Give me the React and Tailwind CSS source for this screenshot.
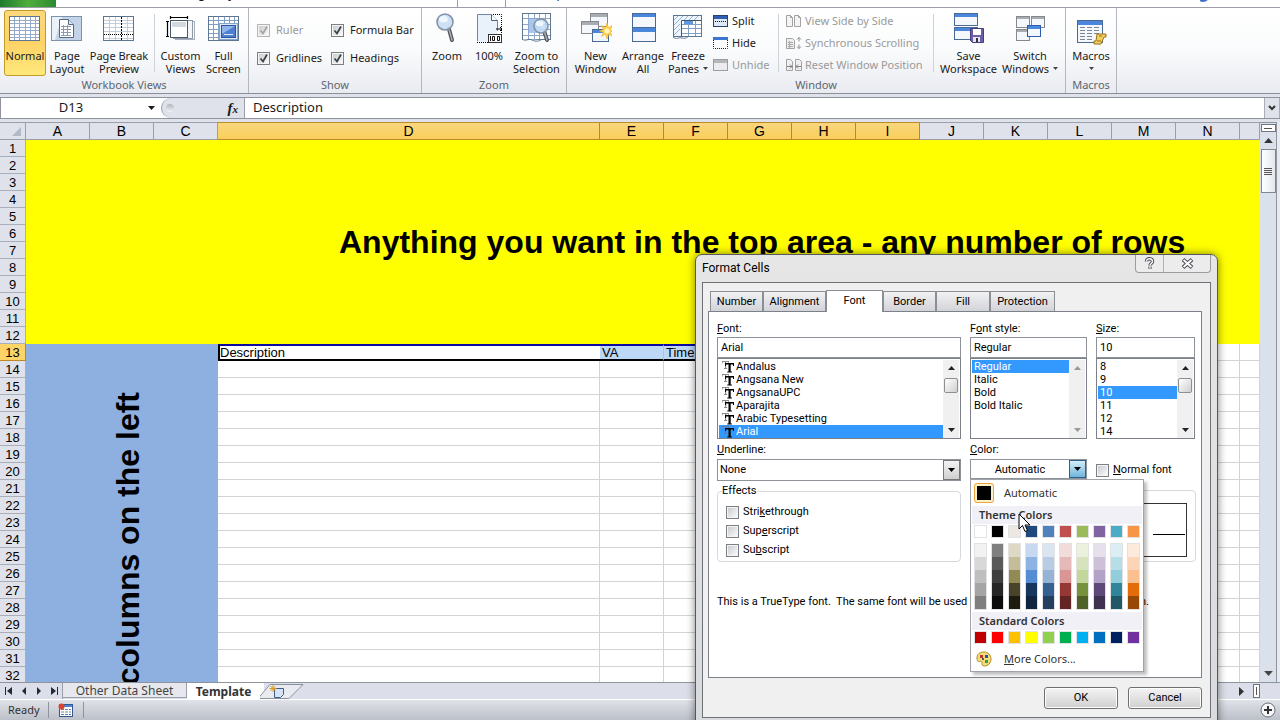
import React from 'react';

/* ---------- ribbon icons ---------- */

const Grid = ({ x = 0, y = 0, w = 31, h = 25, cols = 6, rows = 7, line = '#7f9fc4' }) => (
  <g>
    <rect x={x + 0.5} y={y + 0.5} width={w - 1} height={h - 1} fill="#fff" stroke="#5f7690" />
    {Array.from({ length: cols - 1 }, (_, i) => (
      <path key={'c' + i} d={`M${Math.round(x + ((i + 1) * w) / cols) + 0.5} ${y + 1}v${h - 2}`} stroke={line} />
    ))}
    {Array.from({ length: rows - 1 }, (_, i) => (
      <path key={'r' + i} d={`M${x + 1} ${Math.round(y + ((i + 1) * h) / rows) + 0.5}h${w - 2}`} stroke={line} />
    ))}
  </g>
);

const Win = ({ x, y, w, h, bar = '#4a86dc', stroke = '#4a6a94', fill = '#f4f8fd', t = 3 }) => (
  <g>
    <rect x={x + 0.5} y={y + 0.5} width={w - 1} height={h - 1} fill={fill} stroke={stroke} />
    <rect x={x + 1} y={y + 1} width={w - 2} height={t} fill={bar} />
  </g>
);

const Svg = ({ children, w = 32, h = 32 }) => (
  <svg width={w} height={h} viewBox={`0 0 ${w} ${h}`} fill="none" aria-hidden="true" className="shrink-0">
    {children}
  </svg>
);

const Lens = ({ cx, cy, r, hx, hy }) => (
  <g>
    <path d={`M${cx + r * 0.5} ${cy + r * 0.9}L${hx} ${hy}`} stroke="#4f5358" strokeWidth="4" strokeLinecap="round" />
    <path d={`M${cx + r * 0.5} ${cy + r * 0.9}L${hx} ${hy}`} stroke="#a9adb3" strokeWidth="1.5" strokeLinecap="round" />
    <circle cx={cx} cy={cy} r={r} fill="#c3dcf3" fillOpacity=".85" stroke="#8492a6" strokeWidth="1.6" />
    <ellipse cx={cx - r * 0.2} cy={cy - r * 0.35} rx={r * 0.55} ry={r * 0.4} fill="#eef7ff" />
  </g>
);

const NormalIcon = () => (
  <Svg><Grid y={3} h={25} line="#93abc9" /></Svg>
);
const PageLayoutIcon = () => (
  <Svg>
    <rect x=".5" y="3.5" width="30" height="24" fill="#c4d4e8" stroke="#7d92ac" />
    <path d="M1 4h10L4 27H1z" fill="#eaf1f9" />
    <path d="M8.500 6.500h9l5 5v13h-14z" fill="#fff" stroke="#56697f" />
    <path d="M17.500 6.500v5h5" fill="#dbe6f2" stroke="#56697f" />
    <path d="M10 13.500h10M10 16.500h10M10 19.500h10M10 22.500h10M12.500 12v11M16.500 12v11" stroke="#8a9bb0" />
  </Svg>
);
const PageBreakIcon = () => (
  <Svg>
    <rect x=".5" y="3.500" width="30" height="24" fill="#fff" stroke="#5f7690" />
    <path d="M1 7.500h29M1 10.500h29M1 14.500h29M1 18.500h29M1 25.500h29M6.500 4v23M12.500 4v23M24.500 4v23" stroke="#c3cddb" />
    <path d="M18.500 4v24" stroke="#000" strokeDasharray="2 1" />
    <path d="M1 21.500h30" stroke="#000" strokeDasharray="1 1" />
  </Svg>
);
const CustomViewsIcon = () => (
  <Svg>
    <rect x="10.500" y="8.500" width="19" height="18" fill="#f3f5f8" stroke="#a7afba" />
    <rect x="8.500" y="7.500" width="19" height="18" fill="#f3f5f8" stroke="#8f99a8" />
    <rect x="5.500" y="7.500" width="17" height="17" fill="#fff" stroke="#48566a" />
    <rect x="7" y="9" width="14" height="5" fill="#d2d8e0" />
    <path d="M5 4.500h18M5.500 3v3M22.500 3v3M2.500 8v16M1 8.500h3M1 23.500h3" stroke="#000" strokeWidth="1.200" />
  </Svg>
);
const FullScreenIcon = () => (
  <Svg>
    <Grid y={3} h={25} cols={6} rows={6} />
    <rect x="11.500" y="10.500" width="18" height="16" fill="#dfe9f6" stroke="#8aa4c8" />
    <rect x="13.500" y="12.500" width="14" height="12" fill="#4f7fd0" stroke="#2d559f" />
    <path d="M14 13h13l-13 8z" fill="#8fb4ea" />
    <path d="M16 21.500h9" stroke="#dfe9f6" />
  </Svg>
);
const ZoomIcon = () => <Svg><Lens cx={14} cy={9} r={8} hx={21} hy={27} /></Svg>;
const HundredIcon = () => (
  <Svg>
    <path d="M4 1h14l6 6v22H4z" fill="#e9f1fa" />
    <path d="M4.500 28V1.500h14l6 6V18" stroke="#6d87a6" />
    <path d="M18.500 1.500v6h6" fill="#fff" stroke="#4c5f76" />
    <path d="M20 1.500h8.500V20M4 29.500h12" stroke="#000" strokeDasharray="1 1" />
    <path d="M23 16h6m-2-2l2 2-2 2" stroke="#000" />
    <rect x="15.500" y="21.500" width="13" height="8" fill="#fff" stroke="#333" />
    <path d="M17.500 23v5M19.500 23.500h2v4h-2zM24.500 23.500h2v4h-2z" stroke="#111" />
  </Svg>
);
const ZoomSelIcon = () => (
  <Svg>
    <Grid x={1} y={0} w={29} h={27} cols={5} rows={5} line="#8ba6c8" />
    <rect x="8" y="6" width="12" height="14" fill="#a9c6ee" />
    <path d="M1 26c4 3 6-1 10 1s7 1 9 0" stroke="#5f7690" fill="#fff" />
    <Lens cx={20} cy={13} r={7} hx={26} hy={27} />
  </Svg>
);
const NewWindowIcon = () => (
  <Svg>
    <Win x={10} y={0} w={18} h={14} bar="#a9acb2" stroke="#85898f" />
    <Win x={1} y={8} w={18} h={13} bar="#a9acb2" stroke="#85898f" />
    <Win x={12} y={16} w={17} h={13} />
    <path d="M27 10l1.500 5 4-3-2 4.500 1.500 1.500-1.500 1.500 2 4-4-2.500L27 26l-1.500-5-4 2.500 2-4-4-1.500 4-1.500-2-4 4 2.500z" fill="#ffd24a" stroke="#f0b020" strokeWidth=".6" />
    <circle cx="27" cy="18" r="2.500" fill="#fff6c8" />
  </Svg>
);
const ArrangeIcon = () => (
  <Svg><Win x={5} y={0} w={24} h={15} t={3} /><Win x={5} y={14} w={24} h={15} t={4} /></Svg>
);
const FreezeIcon = () => (
  <Svg>
    <Grid x={1} y={2} w={29} h={22} cols={4} rows={5} />
    <path d="M2 3h27v4H9v16H2z" fill="#eef5fc" />
    <path d="M2 7l4-4M2 12l9-9M2 17l6-6M2 22l6-6M12 7l4-4M17 7l4-4M22 7l4-4" stroke="#8fb3da" />
    <rect x="12" y="7" width="9" height="4" fill="#5f97e0" />
    <path d="M9.500 7.500h20M9.500 7.500v16" stroke="#456" />
    <path d="M1 24c4 3 5 0 9 1s5-1 6-1" stroke="#5f7690" fill="#fff" />
  </Svg>
);
const SaveWsIcon = () => (
  <Svg>
    <Win x={1} y={0} w={24} h={13} t={3} /><Win x={1} y={14} w={24} h={13} t={3} />
    <path d="M17.500 15.500h13v14h-11l-2-2z" fill="#6c5fa8" stroke="#473d80" />
    <rect x="20" y="16" width="8" height="6" fill="#fff" /><rect x="20" y="24" width="7" height="5" fill="#e8e4f5" />
    <rect x="23" y="25" width="2" height="4" fill="#333" />
  </Svg>
);
const SwitchIcon = () => (
  <Svg>
    <Win x={2} y={3} w={14} h={12} bar="#a9acb2" stroke="#85898f" t={2} />
    <Win x={17} y={3} w={14} h={12} bar="#a9acb2" stroke="#85898f" t={2} />
    <Win x={2} y={16} w={14} h={12} bar="#a9acb2" stroke="#85898f" t={2} />
    <Win x={13} y={12} w={14} h={12} stroke="#2b5fae" />
  </Svg>
);
const MacrosIcon = () => (
  <Svg>
    <Win x={2} y={7} w={26} h={23} t={4} />
    <path d="M5 14.500h5M12 14.500h5M19 14.500h5M5 17.500h5M12 17.500h5M19 17.500h5M5 20.500h5M12 20.500h5M19 20.500h5M5 23.500h5M12 23.500h5M5 26.500h5M12 26.500h5" stroke="#7d8894" />
    <path d="M22 21h9v3h-2l-3 7h-7v-3h2z" fill="#f2cf62" stroke="#9a7414" />
    <path d="M24 23h3M22 28h4" stroke="#9a7414" />
  </Svg>
);
const SplitIcon = () => (
  <Svg w={16} h={14}><Win x={0} y={1} w={15} h={12} stroke="#27406e" fill="#dfe9f6" bar="#2f5fae" /><path d="M2 7.500h12" stroke="#111" strokeDasharray="1 1" /></Svg>
);
const HideIcon = () => (
  <Svg w={16} h={14}><path d="M.5 4v8.500h14V4" stroke="#222" strokeDasharray="1 1" /><rect y="1" width="15" height="3" fill="#3a76d2" /></Svg>
);
const UnhideIcon = () => (
  <Svg w={16} h={14}><Win x={0} y={1} w={15} h={12} stroke="#9a9da2" fill="#ececee" bar="#b5b7bb" /></Svg>
);
const SideIcon = () => (
  <Svg w={16} h={14}>
    <path d="M.5 1.500h4l2 2v9h-6zM8.500 1.500h4l2 2v9h-6z" fill="#f4f4f4" stroke="#a2a2a2" />
    <path d="M4.500 1.500v2h2M12.500 1.500v2h2" stroke="#a2a2a2" />
  </Svg>
);
const SyncIcon = () => (
  <Svg w={16} h={14}>
    <path d="M.5 2.500h6l2 2v8h-8z" fill="#eee" stroke="#a2a2a2" />
    <path d="M2 6.500h5M2 8.500h5M2 10.500h5M3.500 5v7" stroke="#aaa" />
    <path d="M13 1.500v4M13 8.500v4M11 3.500l2-2 2 2M11 10.500l2 2 2-2" stroke="#8d8d8d" />
  </Svg>
);
const ResetIcon = () => (
  <Svg w={16} h={14}>
    <path d="M.5 1.500h4l2 2v9h-6zM9.500 1.500h4l2 2v9h-6z" fill="#f0f0f0" stroke="#a2a2a2" />
    <path d="M1 8.500h5M4 6.500l2 2-2 2M15 8.500h-5M12 6.500l-2 2 2 2" stroke="#808080" />
  </Svg>
);
const Down = ({ className = '' }) => (
  <svg width="7" height="4" viewBox="0 0 7 4" aria-hidden="true" className={'shrink-0 ' + className}>
    <path d="M0 0h7L3.500 4z" fill="currentColor" />
  </svg>
);
const Up = ({ className = '' }) => (
  <svg width="7" height="4" viewBox="0 0 7 4" aria-hidden="true" className={'shrink-0 ' + className}>
    <path d="M0 4h7L3.500 0z" fill="currentColor" />
  </svg>
);

/* ---------- ribbon ---------- */

const Group = ({ title, className, children }) => (
  <section className={'flex h-full shrink-0 flex-col border-r border-[#b4b8be] pt-[2px] ' + className}>
    <div className="flex flex-1">{children}</div>
    <h2 className="h-4 text-center leading-4 text-[#5d6570]">{title}</h2>
  </section>
);

const Big = ({ icon, lines, drop, active, className }) => (
  <button
    className={
      'flex h-[66px] shrink-0 flex-col items-center whitespace-nowrap rounded-[3px] border pt-[2px] leading-[13px] ' +
      (active ? 'border-[#c29b29] bg-linear-to-b from-[#fbd97c] via-[#fdd368] to-[#ffe87a] ' : 'border-transparent ') +
      className
    }
  >
    {icon}
    <span className="mt-1">{lines[0]}</span>
    <span className="flex min-h-[13px] items-center gap-1">
      {lines[1]}
      {drop && <Down className="h-[3px] w-[5px] text-[#444]" />}
    </span>
  </button>
);

const Small = ({ icon, label, disabled }) => (
  <button disabled={disabled} className={'flex h-[22px] items-center gap-[3px] whitespace-nowrap ' + (disabled ? 'text-[#9a9a9a]' : '')}>
    {icon}
    {label}
  </button>
);

const Check = ({ label, checked, disabled, className = '', children }) => (
  <label className={'flex items-center whitespace-nowrap ' + className}>
    <span className="grid shrink-0">
      <input
        type="checkbox"
        defaultChecked={checked}
        disabled={disabled}
        className={
          'col-start-1 row-start-1 h-[13px] w-[13px] appearance-none border bg-linear-to-br from-[#c4c7cc] to-white shadow-[inset_0_0_0_1px_#f4f4f4] ' +
          (disabled ? 'border-[#b5b5b5]' : 'border-[#7c7f84]')
        }
      />
      {checked && (
        <svg width="13" height="13" viewBox="0 0 13 13" fill="none" className="pointer-events-none col-start-1 row-start-1" aria-hidden="true">
          <path d="M3.500 6.500l2.500 3 4-7" stroke={disabled ? '#a5a5a5' : '#3f444c'} strokeWidth="1.800" />
        </svg>
      )}
    </span>
    {label}
    {children}
  </label>
);

const Sep = () => <div className="mt-1 h-[58px] w-px shrink-0 bg-[#cfd2d8]" />;

const Ribbon = () => (
  <div className="flex h-[86px] shrink-0 border-b border-[#8b8f97] bg-linear-to-b from-white via-[#fafbfc] to-[#e9ebf1] text-[11px]">
    <Group title="Workbook Views" className="w-[249px]">
      <div className="flex pl-1">
        <Big active icon={<NormalIcon />} lines={['Normal', '']} className="w-[42px]" />
        <Big icon={<PageLayoutIcon />} lines={['Page', 'Layout']} className="w-[42px]" />
        <Big icon={<PageBreakIcon />} lines={['Page Break', 'Preview']} className="w-[62px]" />
        <div className="w-1" />
        <Sep />
        <div className="w-1" />
        <Big icon={<CustomViewsIcon />} lines={['Custom', 'Views']} className="w-[43px]" />
        <Big icon={<FullScreenIcon />} lines={['Full', 'Screen']} className="w-[43px]" />
      </div>
    </Group>
    <Group title="Show" className="w-[173px]">
      <div className="grid grid-cols-[74px_auto] content-start gap-y-3 pt-3 pl-2">
        <Check label="Ruler" checked disabled className="h-4 gap-[6px] text-[#9a9a9a]" />
        <Check label="Formula Bar" checked className="h-4 gap-[6px]" />
        <Check label="Gridlines" checked className="h-4 gap-[6px]" />
        <Check label="Headings" checked className="h-4 gap-[6px]" />
      </div>
    </Group>
    <Group title="Zoom" className="w-[145px]">
      <div className="flex pl-1">
        <Big icon={<ZoomIcon />} lines={['Zoom', '']} className="w-[42px]" />
        <Big icon={<HundredIcon />} lines={['100%', '']} className="w-[42px]" />
        <Big icon={<ZoomSelIcon />} lines={['Zoom to', 'Selection']} className="w-[53px]" />
      </div>
    </Group>
    <Group title="Window" className="w-[499px]">
      <div className="flex pl-1">
        <Big icon={<NewWindowIcon />} lines={['New', 'Window']} className="w-[49px]" />
        <Big icon={<ArrangeIcon />} lines={['Arrange', 'All']} className="w-[46px]" />
        <Big icon={<FreezeIcon />} lines={['Freeze', 'Panes']} drop className="w-[44px]" />
        <div className="ml-[3px] flex w-[65px] flex-col">
          <Small icon={<SplitIcon />} label="Split" />
          <Small icon={<HideIcon />} label="Hide" />
          <Small icon={<UnhideIcon />} label="Unhide" disabled />
        </div>
        <Sep />
        <div className="ml-[7px] flex w-[147px] flex-col">
          <Small icon={<SideIcon />} label="View Side by Side" disabled />
          <Small icon={<SyncIcon />} label="Synchronous Scrolling" disabled />
          <Small icon={<ResetIcon />} label="Reset Window Position" disabled />
        </div>
        <Sep />
        <div className="w-1" />
        <Big icon={<SaveWsIcon />} lines={['Save', 'Workspace']} className="w-[61px]" />
        <Big icon={<SwitchIcon />} lines={['Switch', 'Windows']} drop className="w-[62px]" />
      </div>
    </Group>
    <Group title="Macros" className="w-[51px]">
      <Big icon={<MacrosIcon />} lines={['Macros', '']} drop className="w-[50px]" />
    </Group>
  </div>
);

const TabStrip = () => (
  <div className="flex h-2 shrink-0 items-end overflow-hidden border-b border-[#9a9ea6] bg-white text-[12px]">
    <div className="h-full w-[56px] shrink-0 bg-linear-to-r from-[#1d7a2e] via-[#4fae3c] to-[#2b8a30]" />
    <a href="#page-layout" className="mb-[3px] ml-[128px] h-5 w-[273px] leading-5">Page Layout</a>
    <div className="h-full w-[49px] border-x border-[#9a9ea6] bg-white" />
    <a href="#developer" className="mb-[3px] ml-3 h-5 flex-1 leading-5">Developer</a>
    <svg width="80" height="8" viewBox="0 0 80 8" aria-hidden="true" className="shrink-0">
      <circle cx="3" cy="-4" r="7" fill="#3d72c8" />
      <path d="M41 .5h7" stroke="#444" />
    </svg>
  </div>
);

const FormulaBar = () => (
  <div className="my-[3px] flex h-[22px] shrink-0 border-y border-[#8f949c] bg-white text-[13px]">
    <div className="flex w-[161px] items-center border-l border-[#8f949c]">
      <input aria-label="Name Box" defaultValue="D13" className="w-[140px] text-center outline-none" />
      <button aria-label="Name list" className="flex h-full flex-1 items-center justify-center"><Down /></button>
    </div>
    <div className="flex w-[84px] items-center justify-between rounded-l-full border-r border-l border-[#9a9fa8] bg-[#dfe2ea] pr-[6px] pl-1">
      <span className="h-2 w-2 rounded-full bg-linear-to-b from-[#b3b7bf] to-[#f2f3f6]" />
      <button aria-label="Insert Function" className="font-['Liberation_Serif',serif] text-[15px] leading-4 font-bold italic">
        f<span className="text-[11px]">x</span>
      </button>
    </div>
    <input aria-label="Formula" defaultValue="Description" className="min-w-0 flex-1 pl-2 outline-none" />
    <button aria-label="Expand formula bar" className="flex w-4 items-center justify-center border-x border-[#a9adb5] bg-[#dfe2ea]">
      <svg width="8" height="6" viewBox="0 0 8 6" fill="none"><path d="M1 1l3 3 3-3" stroke="#333" strokeWidth="2" /></svg>
    </button>
  </div>
);

/* ---------- worksheet ---------- */

const COLS = ['A', 'B', 'C', 'D', 'E', 'F', 'G', 'H', 'I', 'J', 'K', 'L', 'M', 'N', ''];
const PICKED = ['D', 'E', 'F', 'G', 'H', 'I'];
const ROWS = Array.from({ length: 34 }, (_, i) => i + 1);
const BODY = ['D', 'E', 'F', 'G', 'H', 'I', 'J', 'K', 'L', 'M', 'N', ''];
const VALUES = { D: 'Description', E: 'VA', F: 'Time' };

const selectedCell = (c) =>
  'border-y-2 border-t-[#0a0aa0] border-b-black ' +
  (c === 'D' ? 'bg-white border-l-2 border-l-black' : 'bg-[#bcd8f6] border-r border-r-[#a9c4e2]');

const Sheet = () => (
  <div className="flex min-h-0 flex-1">
    <div className="min-w-0 flex-1 overflow-hidden bg-white text-black">
      <table className="w-full table-fixed border-separate border-spacing-0 font-['Liberation_Sans',sans-serif] text-[13px] leading-[15px]">
        <colgroup>
          <col className="w-[26px]" />
          {COLS.map((c, i) => (
            <col key={i} className={c === 'D' ? 'w-[382px]' : c ? 'w-16' : ''} />
          ))}
        </colgroup>
        <thead>
          <tr className="h-[18px] text-[14px] leading-4">
            <th aria-label="Select all" className="border border-l-0 border-[#9aa0ab] bg-[#dfe2ea] p-0">
              <svg width="9" height="9" viewBox="0 0 9 9" className="mr-1 ml-auto" aria-hidden="true"><path d="M9 0v9H0z" fill="#b4bac5" /></svg>
            </th>
            {COLS.map((c, i) => (
              <th
                key={i}
                className={
                  'border-y border-r p-0 font-normal ' +
                  (PICKED.includes(c)
                    ? 'border-[#b98a26] bg-linear-to-b from-[#fbd67c] to-[#f9cf5b]'
                    : 'border-[#9aa0ab] bg-[#dfe2ea]')
                }
              >
                {c}
              </th>
            ))}
          </tr>
        </thead>
        <tbody>
          {ROWS.map((r) => (
            <tr key={r} className="h-[17px]">
              <th
                className={
                  'border-r border-b p-0 font-normal ' +
                  (r === 13 ? 'border-[#b98a26] bg-[#fdd567]' : 'border-[#a9aeb9] bg-[#dfe2ea]')
                }
              >
                {r}
              </th>
              {r === 1 && (
                <td colSpan={15} rowSpan={12} className="bg-[#ffff00] p-0 pl-[313px] text-[32px] leading-9 font-bold whitespace-nowrap">
                  Anything you want in the top area - any number of rows
                </td>
              )}
              {r === 13 && (
                <td colSpan={3} rowSpan={22} className="bg-[#8db0e0] p-0 align-top">
                  <div className="flex justify-center pt-12 pl-3">
                    <span className="rotate-180 text-[32px] leading-9 font-bold whitespace-nowrap [writing-mode:vertical-rl]">
                      columns on the left
                    </span>
                  </div>
                </td>
              )}
              {r >= 13 &&
                BODY.map((c, i) => (
                  <td
                    key={i}
                    className={
                      'p-0 ' +
                      (r === 13 && PICKED.includes(c)
                        ? 'leading-[13px] ' + selectedCell(c)
                        : 'border-r border-b border-[#d0d3d8] bg-white') +
                      (r === 13 && c !== 'D' ? ' pl-[2px]' : '')
                    }
                  >
                    {r === 13 ? VALUES[c] : null}
                  </td>
                ))}
            </tr>
          ))}
        </tbody>
      </table>
    </div>
    <div className="flex w-4 shrink-0 flex-col items-center border-t border-[#8f949c] bg-[#dbe1eb]">
      <div className="mt-px flex h-2 w-[15px] items-center justify-center border border-[#6f7580] bg-white"><span className="h-px w-2 bg-[#555]" /></div>
      <button aria-label="Scroll up" className="flex h-[17px] w-full items-center justify-center"><Up className="h-[5px] w-[9px] text-[#333]" /></button>
      <div className="flex h-[44px] w-[15px] flex-col items-center justify-center gap-px border border-[#7f8794] bg-linear-to-r from-white to-[#e3e7ee]">
        <span className="h-px w-2 bg-[#555]" /><span className="h-px w-2 bg-[#555]" /><span className="h-px w-2 bg-[#555]" /><span className="h-px w-2 bg-[#555]" />
      </div>
      <button aria-label="Scroll down" className="mt-auto flex h-[17px] w-full items-center justify-center"><Down className="h-[5px] w-[9px] text-[#444]" /></button>
    </div>
    <div className="w-1 shrink-0 border-l border-[#8f949c] bg-[#e8eaef]" />
  </div>
);

const Nav = ({ d, label }) => (
  <button aria-label={label} className="flex w-[15px] items-center justify-center">
    <svg width="8" height="8" viewBox="0 0 8 8" aria-hidden="true"><path d={d} fill="#1f2a3a" /></svg>
  </button>
);

const SheetTabs = () => (
  <div className="flex h-[17px] shrink-0 border-t border-[#8f949c] bg-[#dcdfe9] text-[12px] leading-[15px]">
    <div className="flex w-[63px] border-r border-[#9aa0ab] pl-px">
      <Nav label="First sheet" d="M0 0h1v8H0zM7 0v8L2 4z" />
      <Nav label="Previous sheet" d="M6 0v8L2 4z" />
      <Nav label="Next sheet" d="M2 0v8l4-4z" />
      <Nav label="Last sheet" d="M7 0h1v8H7zM1 0v8l5-4z" />
    </div>
    <button className="mb-px w-[124px] border-r border-b border-[#9aa0ab] bg-[#e6e8ee] text-[#444]">Other Data Sheet</button>
    <button className="w-[73px] bg-white font-bold text-[#333]">Template</button>
    <button aria-label="Insert worksheet" className="bg-linear-to-r from-white from-10% to-transparent to-10%">
      <svg width="44" height="15" viewBox="0 0 44 15" fill="none">
        <path d="M-2 14.500L10 .5h33L29 14.500z" fill="#e9ebf1" stroke="#8a909c" />
        <path d="M14.500 4.500h9v6l-3 3h-6z" fill="#d6e4f6" stroke="#3e5c88" />
        <path d="M13 1v7M9.500 4.500h7M10.500 2l5 5M15.500 2l-5 5" stroke="#e09a1c" />
      </svg>
    </button>
    <div className="ml-auto flex items-center gap-2">
      <svg width="6" height="9" viewBox="0 0 6 9" aria-hidden="true"><path d="M0 0v9l5-4.500z" fill="#333" /></svg>
      <span className="flex h-[14px] w-[7px] items-center justify-center border border-[#6f7580] bg-white"><span className="h-2 w-px bg-[#555]" /></span>
      <span className="w-3" />
    </div>
  </div>
);

const StatusBar = () => (
  <footer className="flex h-[21px] shrink-0 items-center border-t border-white bg-linear-to-b from-[#dfe2e8] to-[#bcc0c8] pl-2 text-[11px] text-[#333]">
    <span className="w-10">Ready</span>
    <span className="h-4 w-px bg-[#8f949c]" />
    <button aria-label="Record macro" className="flex w-[34px] justify-center">
      <svg width="16" height="14" viewBox="0 0 16 14" fill="none">
        <rect x="1.500" y="1.500" width="13" height="12" fill="#fff" stroke="#34588f" />
        <rect x="2" y="2" width="12" height="2" fill="#4a86dc" />
        <path d="M3 6.500h3M7 6.500h3M11 6.500h2M3 9h3M7 9h3M11 9h2M3 11.500h3M7 11.500h3M11 11.500h2" stroke="#6b83a8" />
        <circle cx="3.500" cy="3.500" r="3" fill="#d8452e" />
      </svg>
    </button>
    <span className="h-4 w-px bg-[#8f949c]" />
    <button aria-label="Zoom in" className="ml-auto">
      <svg width="20" height="16" viewBox="0 0 20 16" fill="none">
        <circle cx="8" cy="8" r="7" fill="#f4f5f7" stroke="#6b7078" /><path d="M8 4v8M4 8h8" stroke="#333" strokeWidth="2" />
      </svg>
    </button>
  </footer>
);

/* ---------- Format Cells dialog ---------- */

const Tt = ({ on }) => (
  <svg width="13" height="13" viewBox="0 0 13 13" aria-hidden="true" className="shrink-0">
    <path d="M1 1h7v2.500H7.300V2H5.200v6h1v1H3V8h1V2H1.700v1.500H1z" fill={on ? '#5b7fa8' : '#8b8b8b'} />
    <path d="M4 3h9v3h-1V4.500H9.700V11.500h1.200v1H6.300v-1h1.200V4.500H5V6H4z" fill="#000" />
  </svg>
);

const ListBox = ({ label, items, value, thumb, faded, icons }) => (
  <div className="flex h-[81px] border border-[#7b8089] bg-white px-px pt-px">
    <ul role="listbox" aria-label={label} className="h-[78px] flex-1 overflow-hidden">
      {items.map((it) => (
        <li
          key={it}
          role="option"
          aria-selected={it === value}
          className={
            'flex h-[13px] items-center gap-[2px] pl-[2px] leading-[13px] whitespace-nowrap ' +
            (it === value ? 'bg-[#3399ff] text-white' : '')
          }
        >
          {icons && <Tt on={it === value} />}
          {it}
        </li>
      ))}
    </ul>
    <div className={'flex w-4 flex-col items-center bg-[#f0f0f0] py-[6px] ' + (faded ? 'text-[#999]' : 'text-[#222]')}>
      <Up />
      {thumb && <span className="mt-2 h-[15px] w-[14px] rounded-xs border border-[#8f8f8f] bg-linear-to-br from-white to-[#cfcfcf]" />}
      <Down className="mt-auto" />
    </div>
  </div>
);

const U = ({ children }) => <span className="underline underline-offset-1">{children}</span>;

const Field = ({ id, label, name, value, ...list }) => (
  <div>
    <label htmlFor={id} className="block h-4 leading-4">{label}</label>
    <input id={id} defaultValue={value} className="block h-[21px] w-full border border-[#8e9299] bg-white pl-[3px] outline-none" />
    <ListBox label={name} value={value} {...list} />
  </div>
);

const TABS = [
  ['Number', 'w-[53px]'],
  ['Alignment', 'w-[63px]'],
  ['Font', 'w-[57px]'],
  ['Border', 'w-[53px]'],
  ['Fill', 'w-[54px]'],
  ['Protection', 'w-[65px]'],
];

const THEME = [
  ['bg-[#ffffff]', 'bg-[#f2f2f2]', 'bg-[#d8d8d8]', 'bg-[#bfbfbf]', 'bg-[#a5a5a5]', 'bg-[#7f7f7f]'],
  ['bg-[#000000]', 'bg-[#7f7f7f]', 'bg-[#595959]', 'bg-[#3f3f3f]', 'bg-[#262626]', 'bg-[#0c0c0c]'],
  ['bg-[#ece8e1]', 'bg-[#ddd9c3]', 'bg-[#c4bd97]', 'bg-[#938953]', 'bg-[#494429]', 'bg-[#1d1b10]'],
  ['bg-[#1f497d]', 'bg-[#c6d9f0]', 'bg-[#8db3e2]', 'bg-[#548dd4]', 'bg-[#17365d]', 'bg-[#0f243e]'],
  ['bg-[#4f81bd]', 'bg-[#dbe5f1]', 'bg-[#b8cce4]', 'bg-[#95b3d7]', 'bg-[#366092]', 'bg-[#244061]'],
  ['bg-[#c0504d]', 'bg-[#f2dcdb]', 'bg-[#e5b9b7]', 'bg-[#d99694]', 'bg-[#953734]', 'bg-[#632423]'],
  ['bg-[#9bbb59]', 'bg-[#ebf1dd]', 'bg-[#d7e3bc]', 'bg-[#c3d69b]', 'bg-[#76923c]', 'bg-[#4f6128]'],
  ['bg-[#8064a2]', 'bg-[#e5e0ec]', 'bg-[#ccc1d9]', 'bg-[#b2a2c7]', 'bg-[#5f497a]', 'bg-[#3f3151]'],
  ['bg-[#4bacc6]', 'bg-[#dbeef3]', 'bg-[#b7dde8]', 'bg-[#92cddc]', 'bg-[#31859b]', 'bg-[#205867]'],
  ['bg-[#f79646]', 'bg-[#fdeada]', 'bg-[#fbd5b5]', 'bg-[#fac08f]', 'bg-[#e36c09]', 'bg-[#974806]'],
];
const STANDARD = ['bg-[#c00000]', 'bg-[#ff0000]', 'bg-[#ffc000]', 'bg-[#ffff00]', 'bg-[#92d050]', 'bg-[#00b050]', 'bg-[#00b0f0]', 'bg-[#0070c0]', 'bg-[#002060]', 'bg-[#7030a0]'];

const Swatch = ({ color, label }) => (
  <button aria-label={label} className={'h-[13px] w-[13px] border border-[#e2e2e4] ' + color} />
);

const ColorMenu = () => (
  <div className="absolute top-full left-0 z-10 w-[174px] border border-[#a0a3a9] bg-white p-px pb-0 font-['Noto_Sans',sans-serif] text-[11px] text-[#333] shadow-[3px_3px_3px_rgba(0,0,0,.25)]">
    <button className="flex h-6 w-full items-center gap-[10px] pl-[2px]">
      <span className="flex h-5 w-5 items-center justify-center rounded-[3px] border border-[#e8a33d] bg-[#fdf0c8]">
        <span className="h-[14px] w-[14px] bg-black" />
      </span>
      Automatic
    </button>
    <h3 className="mt-px h-[18px] bg-[#f0f0f6] pl-[7px] leading-[18px] font-semibold">Theme Colors</h3>
    <div className="flex gap-1 px-[2px] pt-px">
      {THEME.map((col, i) => (
        <div key={i} className="flex flex-col">
          <Swatch color={col[0]} label={`Theme color ${i + 1}`} />
          <div className="mt-[5px] flex flex-col border border-[#e2e2e4]">
            {col.slice(1).map((c, j) => (
              <button key={j} aria-label={`Theme color ${i + 1} shade ${j + 1}`} className={'h-[13px] w-[11px] ' + c} />
            ))}
          </div>
        </div>
      ))}
    </div>
    <h3 className="mt-[2px] h-[18px] bg-[#f0f0f6] pl-[7px] leading-[18px] font-semibold">Standard Colors</h3>
    <div className="flex gap-1 px-[2px] pt-px">
      {STANDARD.map((c, i) => (
        <Swatch key={i} color={c} label={`Standard color ${i + 1}`} />
      ))}
    </div>
    <button className="mt-[3px] flex h-6 w-full items-center gap-3 pl-1">
      <svg width="16" height="16" viewBox="0 0 16 16" aria-hidden="true">
        <path d="M8 1c4 0 7 3 7 7s-3 7-6.500 7C6 15 5.500 13 6 11.500 6 10 5 10 3.500 10.500 1.500 11 1 9 1 7c0-4 3-6 7-6z" fill="#f3dd7a" stroke="#b08a24" />
        <rect x="4" y="4" width="3" height="3" fill="#c8342a" /><rect x="9" y="4" width="3" height="3" fill="#2b4fae" />
        <rect x="9" y="9" width="3" height="3" fill="#3b9a3f" /><rect x="6" y="7" width="2" height="2" fill="#555" />
      </svg>
      <span><U>M</U>ore Colors...</span>
    </button>
    <svg width="13" height="20" viewBox="0 0 13 20" aria-hidden="true" className="pointer-events-none absolute top-[33px] left-[47px]">
      <path d="M1 1v15l3.500-3.500 2.500 6 2.500-1-2.500-5.500h5z" fill="#fff" stroke="#000" />
    </svg>
  </div>
);

const Dialog = () => (
  <div
    role="dialog"
    aria-labelledby="dialog-title"
    className="absolute top-[254px] left-[695px] w-[523px] rounded-t-[7px] border border-[#55585c] bg-linear-to-b from-[#e6e6e6] to-[#d9dadc] px-[6px] pb-2 font-[Roboto,sans-serif] text-[11px] text-black shadow-[0_0_8px_rgba(0,0,0,.5)]"
  >
    <div className="flex h-[27px] justify-between">
      <h1 id="dialog-title" className="pt-1 text-[12px] leading-[18px]">Format Cells</h1>
      <div className="flex h-[18px] rounded-b-[4px] border border-t-0 border-[#9a9da1] bg-[#ececec]">
        <button aria-label="Help" className="flex w-7 items-center justify-center border-r border-[#b0b2b5]">
          <svg width="11" height="13" viewBox="0 0 11 13" fill="none" aria-hidden="true">
            <path d="M2.500 4.500c0-4 6-3.500 6 0 0 2-2.500 2-2.500 4M6 9.800v2" stroke="#4a4e58" strokeWidth="3.400" />
            <path d="M2.500 4.500c0-4 6-3.500 6 0 0 2-2.500 2-2.500 4M6 10v1.600" stroke="#fff" strokeWidth="1.400" />
          </svg>
        </button>
        <button aria-label="Close" className="flex w-[46px] items-center justify-center">
          <svg width="13" height="11" viewBox="0 0 13 11" fill="none" aria-hidden="true">
            <path d="M2 1.500l9 8M11 1.500l-9 8" stroke="#4a4e58" strokeWidth="4" />
            <path d="M2.600 2l7.800 7M10.400 2l-7.800 7" stroke="#fff" strokeWidth="2" />
          </svg>
        </button>
      </div>
    </div>

    <div className="border border-[#6e7175] bg-[#f0f0f0] pt-[7px] pr-2 pb-2 pl-[5px]">
      <div role="tablist" className="flex items-end pl-[2px]">
        {TABS.map(([t, w]) => (
          <button
            key={t}
            role="tab"
            aria-selected={t === 'Font'}
            className={
              w +
              ' border border-b-0 border-[#8b8e94] ' +
              (t === 'Font' ? 'z-1 -mb-px h-[22px] bg-white' : 'h-5 bg-linear-to-b from-[#f1f1f3] to-[#d3d4d8] pt-[2px]')
            }
          >
            {t}
          </button>
        ))}
      </div>

      <div className="h-[367px] border border-[#7b8089] bg-white px-2 pt-[9px]">
        <div className="grid grid-cols-[244px_117px_99px] gap-x-[9px]">
          <Field
            id="font" name="Fonts" label={<><U>F</U>ont:</>} value="Arial" icons thumb
            items={['Andalus', 'Angsana New', 'AngsanaUPC', 'Aparajita', 'Arabic Typesetting', 'Arial']}
          />
          <Field id="style" name="Font styles" label={<>F<U>o</U>nt style:</>} value="Regular" faded items={['Regular', 'Italic', 'Bold', 'Bold Italic']} />
          <Field id="size" name="Sizes" label={<><U>S</U>ize:</>} value="10" thumb items={['8', '9', '10', '11', '12', '14']} />
        </div>

        <div className="mt-[3px] grid grid-cols-[244px_117px_99px] gap-x-[9px]">
          <div>
            <label htmlFor="underline" className="block h-4 leading-4"><U>U</U>nderline:</label>
            <div className="mt-px grid h-[22px] border border-[#8e9299]">
              <select id="underline" defaultValue="None" className="col-start-1 row-start-1 w-full appearance-none bg-white pl-[2px] outline-none">
                <option>None</option>
              </select>
              <span className="pointer-events-none col-start-1 row-start-1 flex w-[17px] items-center justify-center justify-self-end border border-[#777] bg-linear-to-b from-[#f3f3f3] to-[#d0d0d0]"><Down /></span>
            </div>
          </div>
          <div className="relative mb-[2px]">
            <span id="color-label" className="block h-4 leading-4"><U>C</U>olor:</span>
            <button aria-labelledby="color-label" aria-haspopup="menu" className="mt-px flex h-5 w-full border border-[#8e9299] bg-white">
              <span className="flex-1 leading-[19px]">Automatic</span>
              <span className="flex h-full w-[17px] items-center justify-center border border-[#2c628b] bg-linear-to-b from-[#d3ecf9] to-[#6fb5dc]"><Down /></span>
            </button>
            <ColorMenu />
          </div>
          <Check className="h-[22px] gap-1 self-end"><span><U>N</U>ormal font</span></Check>
        </div>

        <div className="mt-[2px] grid grid-cols-[244px_226px] gap-x-[9px]">
          <fieldset className="h-[79px] rounded-[4px] border border-[#d5d8dc] pl-2">
            <legend className="-ml-1 h-4 leading-4">Effects</legend>
            <div className="flex flex-col gap-[3px] pt-[5px]">
              <Check className="h-4 gap-1"><span>Stri<U>k</U>ethrough</span></Check>
              <Check className="h-4 gap-1"><span>Sup<U>e</U>rscript</span></Check>
              <Check className="h-4 gap-1"><span>Su<U>b</U>script</span></Check>
            </div>
          </fieldset>
          <div className="mt-[7px] h-[72px] rounded-[4px] border border-[#d5d8dc] px-2 pt-3">
            <div className="flex h-[54px] items-center justify-end border border-[#333] px-px pt-2">
              <span className="h-px w-8 bg-black" />
            </div>
          </div>
        </div>

        <p className="mt-8 whitespace-pre">This is a TrueType font.  The same font will be used on both your printer and your screen.</p>
      </div>

      <div className="mt-[9px] flex justify-end gap-[10px]">
        <button className="h-[22px] w-[74px] rounded-[3px] border border-[#707070] bg-linear-to-b from-[#f4f4f4] to-[#d0d0d0] shadow-[inset_0_0_0_1px_#fcfcfc]">OK</button>
        <button className="h-[22px] w-[74px] rounded-[3px] border border-[#707070] bg-linear-to-b from-[#f4f4f4] to-[#d0d0d0] shadow-[inset_0_0_0_1px_#fcfcfc]">Cancel</button>
      </div>
    </div>
  </div>
);

export default function App() {
  return (
    <main className="relative flex h-screen flex-col overflow-hidden bg-[#dfe2ea] font-['Noto_Sans',sans-serif] text-[#1a1a1a]">
      <TabStrip />
      <Ribbon />
      <FormulaBar />
      <Sheet />
      <SheetTabs />
      <StatusBar />
      <Dialog />
    </main>
  );
}
